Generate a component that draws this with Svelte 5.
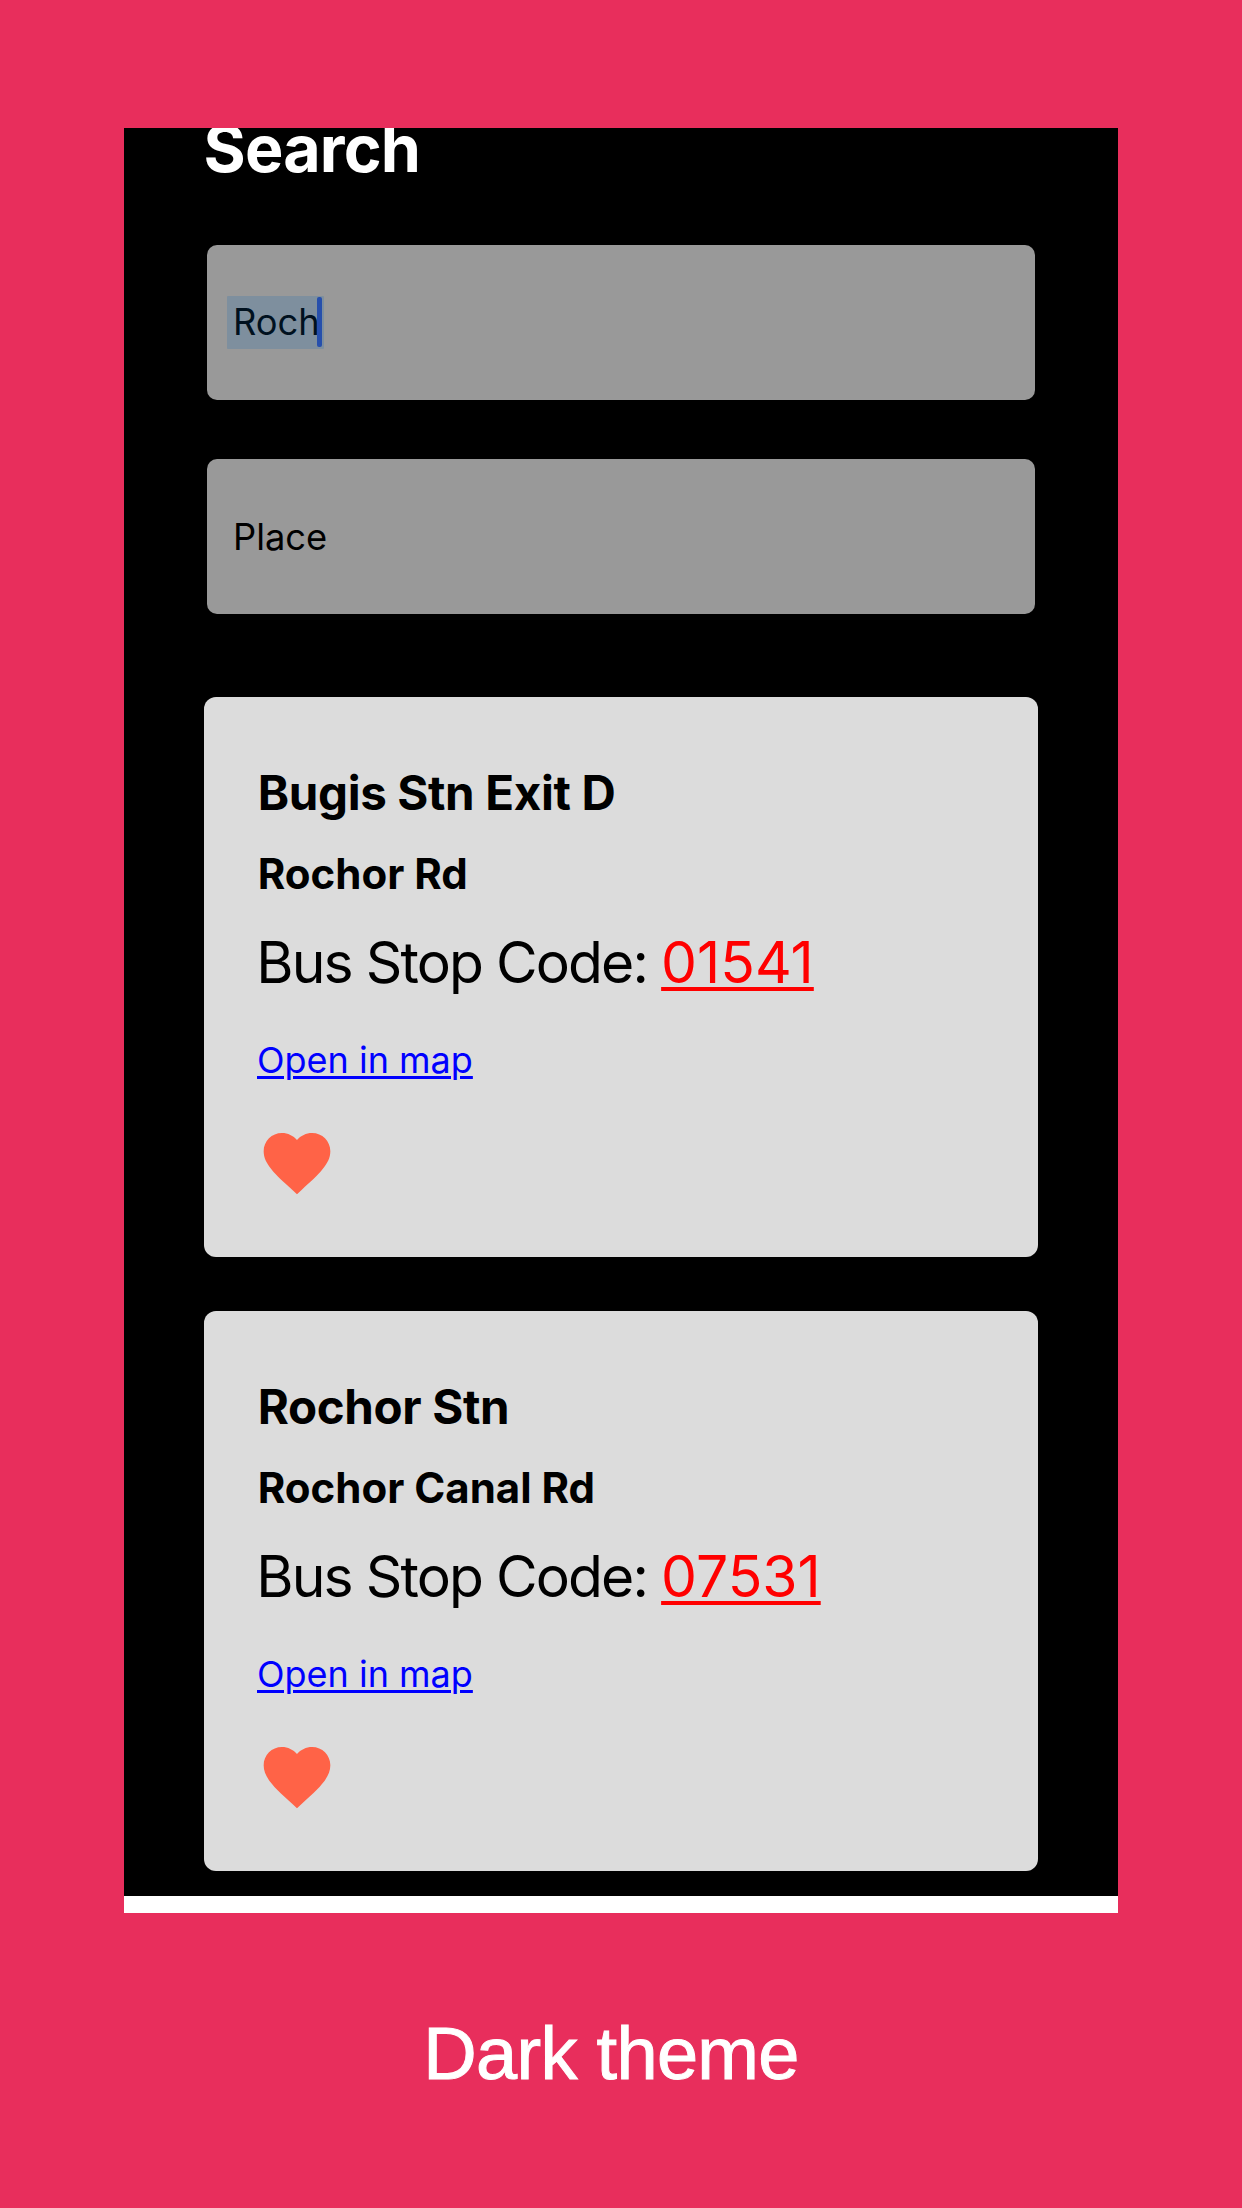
<script>
  const stops = [
    { name: 'Bugis Stn Exit D', road: 'Rochor Rd', code: '01541' },
    { name: 'Rochor Stn', road: 'Rochor Canal Rd', code: '07531' }
  ];
</script>

<main class="poster">
  <section class="phone">
    <div class="screen">
      <h1>Search</h1>
      <div class="field"><span class="selected">Roch<i class="caret"></i></span></div>
      <div class="field second">Place</div>
      <div class="stops">
        {#each stops as stop}
          <article class="card">
            <h2>{stop.name}</h2>
            <h3>{stop.road}</h3>
            <p class="code"><span class="label">{'Bus Stop Code: '}</span><span class="number">{stop.code}</span></p>
            <span class="map">Open in map</span>
            <svg class="heart" viewBox="0 0 24 24" aria-hidden="true">
              <path d="M12 21.35l-1.45-1.32C5.4 15.36 2 12.28 2 8.5 2 5.42 4.42 3 7.5 3c1.74 0 3.41.81 4.5 2.09C13.09 3.81 14.76 3 16.5 3 19.58 3 22 5.42 22 8.5c0 3.78-3.4 6.86-8.55 11.54L12 21.35z" />
            </svg>
          </article>
        {/each}
      </div>
    </div>
  </section>
  <footer>Dark theme</footer>
</main>

<style>
  :global(body) { margin: 0; }
  .poster {
    box-sizing: border-box;
    width: 1242px;
    height: 2208px;
    padding: 128px 124px 0;
    background: #e82e5c;
    overflow: hidden;
    font-family: Inter, "Liberation Sans", sans-serif;
  }
  .phone {
    height: 1785px;
    background: #fff;
  }
  .screen {
    box-sizing: border-box;
    height: 1768px;
    padding: 0 80px;
    background: #000;
    color: #000;
    overflow: hidden;
  }
  h1, h2, h3, p { margin: 0; }
  h1 {
    margin-top: -19px;
    color: #fff;
    font-size: 64.5px;
    line-height: 80px;
    letter-spacing: -0.8px;
    text-indent: -0.5px;
  }
  .field {
    box-sizing: border-box;
    display: flex;
    align-items: center;
    height: 155px;
    margin: 56px 3px 0;
    padding-left: 26px;
    border-radius: 10px;
    background: #999;
    font-size: 36.3px;
    line-height: 44px;
  }
  .field.second { margin-top: 59px; }
  .selected {
    position: relative;
    height: 53px;
    margin-left: -6.5px;
    padding: 0 4.5px 0 6.5px;
    background: #7e8f9e;
    color: #00111f;
    line-height: 53px;
    border-radius: 1px;
  }
  .caret {
    position: absolute;
    right: 2px;
    top: 1px;
    width: 5px;
    height: 50px;
    border-radius: 2px;
    background: #264fac;
  }
  .stops {
    display: flex;
    flex-direction: column;
    gap: 54.5px;
    margin-top: 83px;
  }
  .card {
    box-sizing: border-box;
    display: flex;
    flex-direction: column;
    align-items: flex-start;
    height: 559.5px;
    padding: 67px 53px 0;
    border-radius: 12px;
    background: #dcdcdc;
  }
  h2 {
    font-size: 47.5px;
    line-height: 58px;
    letter-spacing: -0.35px;
    text-indent: 0.7px;
  }
  h3 {
    margin-top: 27px;
    font-size: 42px;
    line-height: 50px;
    text-indent: 0.7px;
  }
  .code {
    margin-top: 28px;
    font-size: 57px;
    line-height: 71px;
    white-space: pre;
    text-indent: -0.7px;
  }
  .label { letter-spacing: -1.9px; }
  .number {
    color: #f00;
    text-decoration: underline;
    text-decoration-thickness: 4px;
    text-underline-offset: 4px;
  }
  .map {
    margin-top: 40px;
    color: #00f;
    font-size: 36px;
    line-height: 44px;
    text-decoration: underline;
    text-decoration-thickness: 3px;
    text-underline-offset: 3px;
  }
  .heart {
    width: 80px;
    height: 80px;
    margin: 41px 0 0 -0.5px;
    fill: #ff6347;
  }
  footer {
    padding: 99px 20px 0 0;
    color: #fff;
    font: 74px/84px "Liberation Sans", sans-serif;
    letter-spacing: -0.7px;
    text-align: center;
    -webkit-text-stroke: 1px #fff;
  }
</style>
